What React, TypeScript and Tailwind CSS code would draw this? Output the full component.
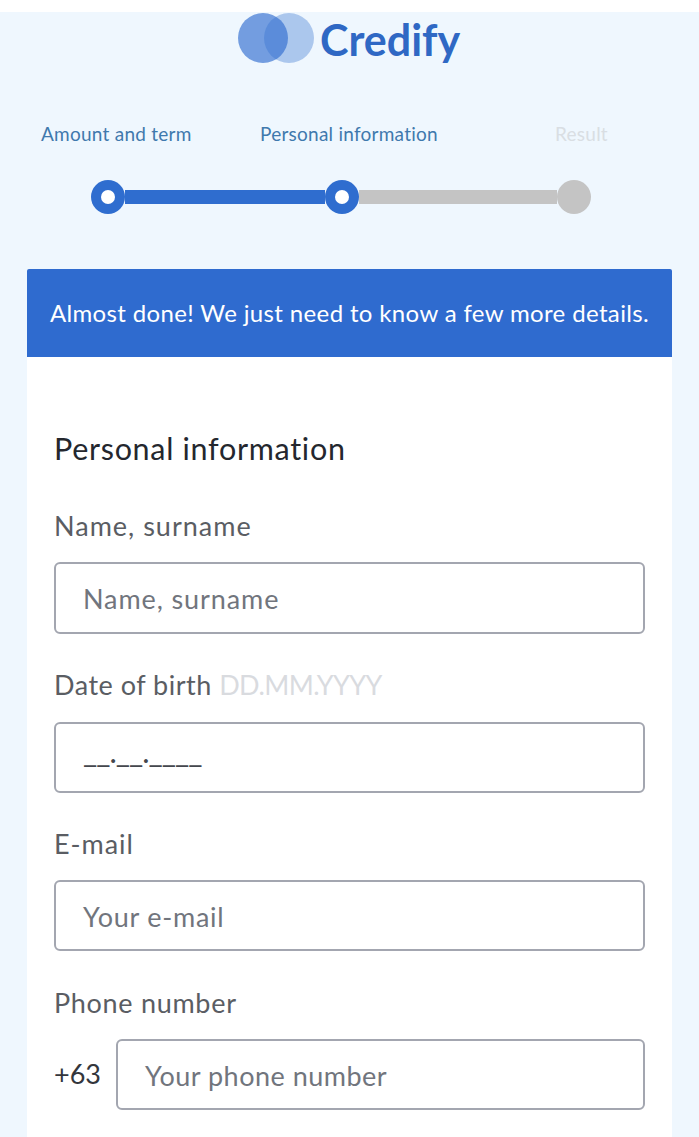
export default function App() {
  const label = "text-[27px] leading-[32px] text-[#5a5d63]";
  const input = "h-[71px] w-full rounded-[6px] border-2 border-[#a3a6b0] bg-white flex items-center pt-[3px] pl-[27px] text-[27px] text-[#71757d]";
  return (
    <div className="w-[699px] h-[1137px] overflow-hidden bg-[#eff7fe] flex flex-col font-['Lato','Noto_Sans',sans-serif]">
      <div className="h-[12px] bg-white shrink-0" />
      <div className="h-[52px] shrink-0 flex items-center pl-[238px] gap-[6px]">
        <svg width="76" height="52" viewBox="0 0 76 52" className="shrink-0">
          <circle cx="51" cy="26" r="25" fill="#2f6dcf" fillOpacity="0.35" />
          <circle cx="25" cy="26" r="25" fill="#2f6dcf" fillOpacity="0.65" />
        </svg>
        <span className="text-[43px] leading-[52px] pt-[3px] font-bold text-[#2f68c4]">Credify</span>
      </div>
      <div className="h-[205px] shrink-0">
        <div className="flex pt-[58px] text-[19px] leading-[24px] tracking-[0.25px]">
          <span className="ml-[41px] w-[219px] text-[#3f79ad]">Amount and term</span>
          <span className="w-[295px] text-[#3f79ad]">Personal information</span>
          <span className="text-[#d9dee3]">Result</span>
        </div>
        <div className="flex items-center ml-[91px] w-[500px] mt-[34px]">
          <div className="w-[34px] h-[34px] rounded-full bg-[#2f6dcf] flex items-center justify-center shrink-0">
            <div className="w-[14px] h-[14px] rounded-full bg-white" />
          </div>
          <div className="w-[200px] h-[14px] bg-[#2f6dcf]" />
          <div className="w-[34px] h-[34px] rounded-full bg-[#2f6dcf] flex items-center justify-center shrink-0">
            <div className="w-[14px] h-[14px] rounded-full bg-white" />
          </div>
          <div className="flex-1 h-[14px] bg-[#c4c4c4]" />
          <div className="w-[34px] h-[34px] rounded-full bg-[#c4c4c4] shrink-0" />
        </div>
      </div>
      <div className="mx-[27px] bg-white flex-1">
        <div className="h-[88px] bg-[#2f6bcf] flex items-center justify-center text-white text-[24px] tracking-[0.36px] rounded-t-[2px]">
          Almost done! We just need to know a few more details.
        </div>
        <div className="px-[27px] pt-[71px]">
          <div className="text-[30.5px] leading-[40px] text-[#24272e] tracking-[0.7px]">Personal information</div>
          <div className={`${label} mt-[42px] tracking-[1px]`}>Name, surname</div>
          <div className={`${input} mt-[20px] h-[72px] tracking-[0.9px]`}>Name, surname</div>
          <div className={`${label} mt-[35px] tracking-[0.5px]`}>
            Date of birth <span className="text-[#d9dbdf] tracking-[-0.6px]">DD.MM.YYYY</span>
          </div>
          <div className={`${input} mt-[21px]`}>
            <span className="text-[31px] tracking-[-1px] text-[#44474d] translate-y-[-8px]">__.__.____</span>
          </div>
          <div className={`${label} mt-[35px] tracking-[0.95px]`}>E-mail</div>
          <div className={`${input} mt-[20px] tracking-[0.75px]`}>Your e-mail</div>
          <div className={`${label} mt-[36px] tracking-[0.7px]`}>Phone number</div>
          <div className="flex items-center mt-[20px]">
            <span className="w-[62px] text-[27px] text-[#33363c] shrink-0">+63</span>
            <div className={`${input} tracking-[0.5px]`}>Your phone number</div>
          </div>
        </div>
      </div>
    </div>
  );
}
